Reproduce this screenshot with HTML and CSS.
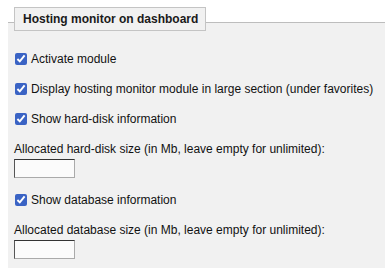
FILE: index.html
```html
<!DOCTYPE html>
<html lang="en">
<head>
    <meta charset="UTF-8">
    <title>Hosting monitor</title>
    <link rel="stylesheet" href="styles.css">
</head>
<body>
    <div class="settings-head">
        <span class="settings-title">Hosting monitor on dashboard</span>
    </div>
    <form class="settings">
        <div class="check-row">
            <input type="checkbox" id="activate" checked>
            <label for="activate">Activate module</label>
        </div>
        <div class="check-row">
            <input type="checkbox" id="large" checked>
            <label for="large">Display hosting monitor module in large section (under favorites)</label>
        </div>
        <div class="check-row">
            <input type="checkbox" id="disk" checked>
            <label for="disk">Show hard-disk information</label>
        </div>
        <div class="input-group">
            <label for="diskSize">Allocated hard-disk size (in Mb, leave empty for unlimited):</label>
            <input type="text" id="diskSize">
        </div>
        <div class="check-row">
            <input type="checkbox" id="db" checked>
            <label for="db">Show database information</label>
        </div>
        <div class="input-group">
            <label for="dbSize">Allocated database size (in Mb, leave empty for unlimited):</label>
            <input type="text" id="dbSize">
        </div>
    </form>
</body>
</html>
```

FILE: styles.css
```css
body {
    font-family: "Liberation Sans", Arial, sans-serif;
    font-size: 12px;
    color: #111;
    background-color: #fff;
    margin: 0;
    padding: 7px 0 0 8px;
}

.settings-head {
    height: 15px;
    padding-left: 6px;
}

.settings-title {
    position: relative;
    z-index: 1;
    display: inline-block;
    padding: 5px 7px 5px 8px;
    font-weight: bold;
    line-height: 12px;
    color: #1a1a1a;
    background-color: #f1f1f1;
    border: 1px solid #c4c4c4;
}

.settings {
    margin: 0;
    padding: 29px 0 9px 6px;
    border-top: 1px solid #bdbdbd;
    background-color: #f1f1f1;
}

.check-row {
    display: flex;
    align-items: center;
    height: 14px;
    margin-bottom: 16px;
    white-space: nowrap;
}

.check-row input {
    width: 12px;
    height: 12px;
    margin: 0 4px 0 1px;
    accent-color: #3a63c4;
}

.input-group {
    margin-bottom: 15px;
}

.input-group:last-child {
    margin-bottom: 0;
}

.input-group label {
    display: block;
    height: 14px;
    margin-bottom: 3px;
    white-space: nowrap;
}

.input-group input {
    display: block;
    box-sizing: border-box;
    width: 61px;
    height: 19px;
    margin: 0;
    padding: 2px;
    background-color: #fbfbfb;
    border: 1px solid #aaa;
    border-top-color: #333;
    border-left-color: #555;
}
```
